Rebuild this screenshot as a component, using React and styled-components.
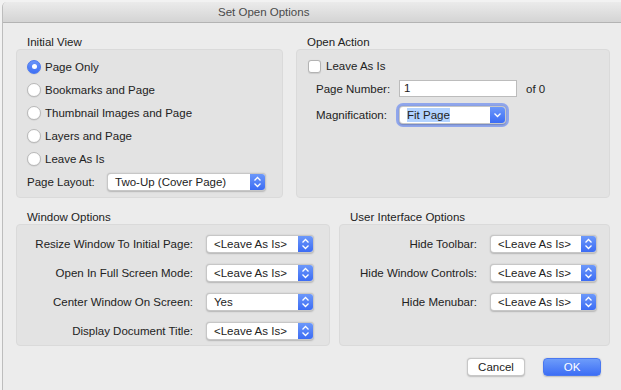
import React from "react";
import styled, { createGlobalStyle } from "styled-components";

const GlobalStyle = createGlobalStyle`
  html, body {
    margin: 0;
    padding: 0;
    background: #f2f2f2;
  }
  body {
    font-family: "Liberation Sans", Arial, sans-serif;
    font-size: 11.5px;
    color: #222;
  }
`;

const Window = styled.div`
  width: 619px;
  height: 388px;
  margin: 2px 0 0 2px;
  background: #ececec;
  border-left: 1px solid #bdbdbd;
  border-top-left-radius: 5px;
  display: flex;
  flex-direction: column;
  overflow: hidden;
`;

const TitleBar = styled.div`
  height: 20px;
  line-height: 20px;
  padding-left: 215px;
  color: #4a4a4a;
  background: linear-gradient(#ebebeb, #d4d4d4);
  border-bottom: 1px solid #b3b3b3;
`;

const Content = styled.div`
  display: flex;
  flex-direction: column;
  padding: 12px 11px 0 13px;
`;

const GroupRow = styled.div`
  display: flex;
  gap: ${(p) => p.gap}px;
  margin-bottom: 12px;
`;

const Section = styled.div`
  width: ${(p) => p.width}px;
  display: flex;
  flex-direction: column;
`;

const SectionLabel = styled.div`
  line-height: 14px;
  padding-left: 11px;
`;

const Box = styled.div`
  height: ${(p) => p.height}px;
  box-sizing: border-box;
  background: #e3e3e3;
  border: 1px solid #dadada;
  border-radius: 4px;
  padding: ${(p) => p.pad};
  display: flex;
  flex-direction: column;
`;

const RadioRow = styled.div`
  height: 23px;
  display: flex;
  align-items: center;
  gap: 4px;
`;

const Radio = styled.span`
  width: 14px;
  height: 14px;
  box-sizing: border-box;
  border-radius: 50%;
  background: ${(p) => (p.checked ? "linear-gradient(#6a95f9, #3f70f5)" : "#fff")};
  border: 1px solid ${(p) => (p.checked ? "#4a78f0" : "#b9b9b9")};
  box-shadow: 0 0.5px 1px rgba(0, 0, 0, 0.12);
  display: flex;
  align-items: center;
  justify-content: center;
  &::after {
    content: "";
    display: ${(p) => (p.checked ? "block" : "none")};
    width: 5px;
    height: 5px;
    border-radius: 50%;
    background: #fff;
  }
`;

const InlineField = styled.div`
  display: flex;
  align-items: center;
  margin-top: 3px;
`;

const FieldLabel = styled.span`
  width: ${(p) => p.width}px;
  flex: none;
`;

const SelectBox = styled.div`
  width: ${(p) => p.width}px;
  height: 18px;
  box-sizing: border-box;
  background: #fff;
  border: 0.5px solid rgba(0, 0, 0, 0.22);
  border-radius: 4px;
  box-shadow: 0 0.5px 1.5px rgba(0, 0, 0, 0.2)${(p) => (p.focus ? ", 0 0 0 3px rgba(108, 140, 240, 0.7)" : "")};
  display: flex;
  align-items: center;
  justify-content: space-between;
  color: #222;
  overflow: hidden;
`;

const SelectText = styled.span`
  padding-left: 7px;
  white-space: nowrap;
`;

const Highlight = styled.span`
  background: #b3d3ff;
  padding: 1px 0;
`;

const Stepper = styled.span`
  width: 15px;
  height: 100%;
  flex: none;
  background: linear-gradient(#6c98fa, #3c6cf4);
  display: flex;
  align-items: center;
  justify-content: center;
`;

const CheckRow = styled.div`
  height: 22px;
  display: flex;
  align-items: center;
  gap: 5px;
`;

const Checkbox = styled.span`
  width: 13px;
  height: 13px;
  box-sizing: border-box;
  background: #fff;
  border: 1px solid #b3b3b3;
  border-radius: 3px;
  box-shadow: 0 0.5px 1px rgba(0, 0, 0, 0.1);
`;

const FormGrid = styled.div`
  display: grid;
  grid-template-columns: 83px 118px auto;
  row-gap: 9px;
  align-items: center;
  margin-top: 3px;
  padding-left: 8px;
`;

const TextInput = styled.div`
  height: 17px;
  box-sizing: border-box;
  background: #fff;
  border: 1px solid #bcbcbc;
  padding-left: 4px;
  line-height: 15px;
`;

const Suffix = styled.span`
  padding-left: 9px;
`;

const OptionGrid = styled.div`
  display: grid;
  grid-template-columns: 1fr ${(p) => p.selectWidth}px;
  grid-auto-rows: 29px;
  column-gap: 13px;
  align-items: center;
  padding-right: ${(p) => p.padRight}px;
`;

const OptionLabel = styled.span`
  text-align: right;
`;

const ButtonRow = styled.div`
  display: flex;
  justify-content: flex-end;
  gap: 18px;
  padding-right: 10px;
`;

const Button = styled.div`
  width: 58px;
  height: 18px;
  box-sizing: border-box;
  border-radius: 4px;
  display: flex;
  align-items: center;
  justify-content: center;
  background: ${(p) => (p.primary ? "linear-gradient(#6d9cfa, #3d6ef5)" : "#fff")};
  color: ${(p) => (p.primary ? "#fff" : "#222")};
  border: 0.5px solid ${(p) => (p.primary ? "#4a78f0" : "rgba(0,0,0,0.22)")};
  box-shadow: 0 0.5px 1.5px rgba(0, 0, 0, 0.2);
`;

const UpDown = () => (
  <svg width="9" height="12" viewBox="0 0 9 12">
    <path d="M1.5 4.5 L4.5 1.5 L7.5 4.5" fill="none" stroke="#fff" strokeWidth="1.3" />
    <path d="M1.5 7.5 L4.5 10.5 L7.5 7.5" fill="none" stroke="#fff" strokeWidth="1.3" />
  </svg>
);

const Down = () => (
  <svg width="9" height="6" viewBox="0 0 9 6">
    <path d="M1.5 1.5 L4.5 4.5 L7.5 1.5" fill="none" stroke="#fff" strokeWidth="1.3" />
  </svg>
);

const Select = ({ width, value, focus, highlight }) => (
  <SelectBox width={width} focus={focus}>
    <SelectText>{highlight ? <Highlight>{value}</Highlight> : value}</SelectText>
    <Stepper>{focus ? <Down /> : <UpDown />}</Stepper>
  </SelectBox>
);

const views = [
  "Page Only",
  "Bookmarks and Page",
  "Thumbnail Images and Page",
  "Layers and Page",
  "Leave As Is",
];

const windowOptions = [
  ["Resize Window To Initial Page:", "<Leave As Is>"],
  ["Open In Full Screen Mode:", "<Leave As Is>"],
  ["Center Window On Screen:", "Yes"],
  ["Display Document Title:", "<Leave As Is>"],
];

const uiOptions = [
  ["Hide Toolbar:", "<Leave As Is>"],
  ["Hide Window Controls:", "<Leave As Is>"],
  ["Hide Menubar:", "<Leave As Is>"],
];

export default function App() {
  return (
    <>
      <GlobalStyle />
      <Window>
        <TitleBar>Set Open Options</TitleBar>
        <Content>
          <GroupRow gap={13}>
            <Section width={267}>
              <SectionLabel>Initial View</SectionLabel>
              <Box height={149} pad="5px 0 0 10px">
                {views.map((v, i) => (
                  <RadioRow key={v}>
                    <Radio checked={i === 0} />
                    {v}
                  </RadioRow>
                ))}
                <InlineField>
                  <FieldLabel width={80}>Page Layout:</FieldLabel>
                  <Select width={159} value="Two-Up (Cover Page)" />
                </InlineField>
              </Box>
            </Section>
            <Section width={314}>
              <SectionLabel>Open Action</SectionLabel>
              <Box height={149} pad="5px 0 0 11px">
                <CheckRow>
                  <Checkbox />
                  Leave As Is
                </CheckRow>
                <FormGrid>
                  <span>Page Number:</span>
                  <TextInput>1</TextInput>
                  <Suffix>of 0</Suffix>
                  <span>Magnification:</span>
                  <Select width={107} value="Fit Page" focus highlight />
                </FormGrid>
              </Box>
            </Section>
          </GroupRow>
          <GroupRow gap={9}>
            <Section width={314}>
              <SectionLabel>Window Options</SectionLabel>
              <Box height={122} pad="4px 0 0 10px">
                <OptionGrid selectWidth={108} padRight={15}>
                  {windowOptions.map(([label, value]) => (
                    <React.Fragment key={label}>
                      <OptionLabel>{label}</OptionLabel>
                      <Select width={108} value={value} />
                    </React.Fragment>
                  ))}
                </OptionGrid>
              </Box>
            </Section>
            <Section width={271}>
              <SectionLabel>User Interface Options</SectionLabel>
              <Box height={122} pad="4px 0 0 10px">
                <OptionGrid selectWidth={107} padRight={12}>
                  {uiOptions.map(([label, value]) => (
                    <React.Fragment key={label}>
                      <OptionLabel>{label}</OptionLabel>
                      <Select width={107} value={value} />
                    </React.Fragment>
                  ))}
                </OptionGrid>
              </Box>
            </Section>
          </GroupRow>
          <ButtonRow>
            <Button>Cancel</Button>
            <Button primary>OK</Button>
          </ButtonRow>
        </Content>
      </Window>
    </>
  );
}
